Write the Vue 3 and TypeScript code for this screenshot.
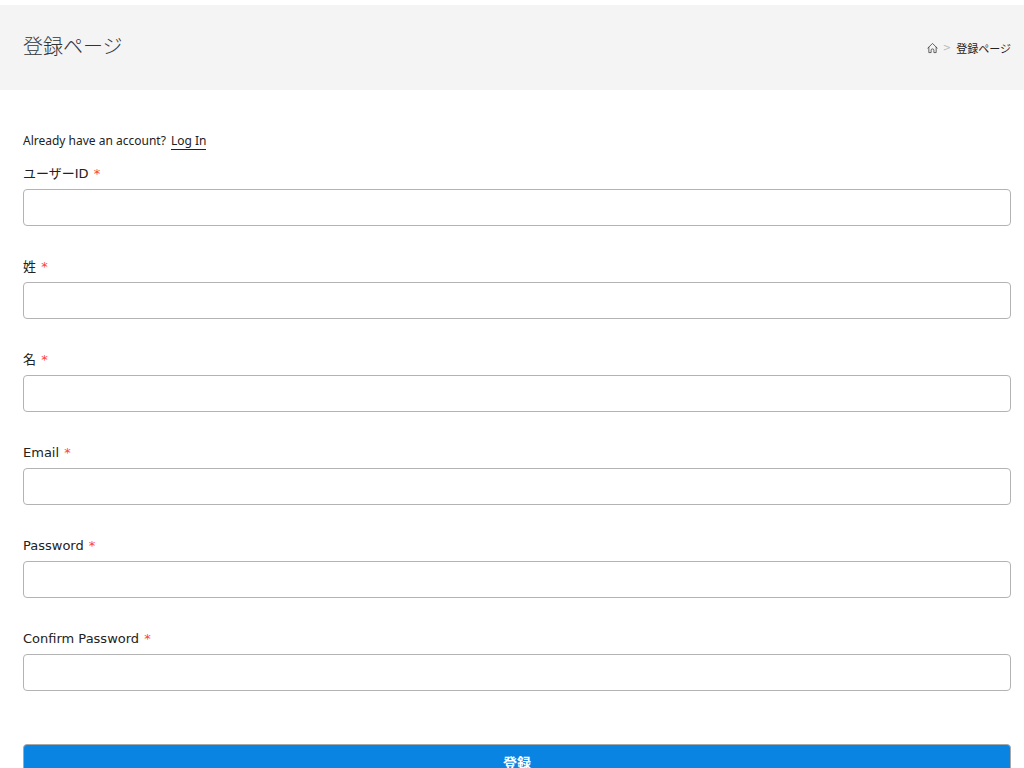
<script setup lang="ts">
import { reactive } from 'vue'

interface Field {
  id: string
  label: string
  type: string
}

const fields: Field[] = [
  { id: 'username', label: 'ユーザーID', type: 'text' },
  { id: 'last-name', label: '姓', type: 'text' },
  { id: 'first-name', label: '名', type: 'text' },
  { id: 'email', label: 'Email', type: 'email' },
  { id: 'password', label: 'Password', type: 'password' },
  { id: 'confirm-password', label: 'Confirm Password', type: 'password' },
]

const values = reactive<Record<string, string>>({})
</script>

<template>
  <div class="page">
    <header class="page-header">
      <h1 class="title">登録ページ</h1>
      <nav class="breadcrumb" aria-label="breadcrumb">
        <a href="#" class="home" aria-label="Home">
          <svg viewBox="0 0 12 12" width="11" height="12" fill="none" stroke="currentColor" stroke-width="0.9" stroke-linejoin="round" stroke-linecap="round">
            <path d="M0.8 6.2 L6 1 L11.2 6.2 M2 5.2 V11 H4.5 V8.4 Q4.5 7 6 7 Q7.5 7 7.5 8.4 V11 H10 V5.2" />
          </svg>
        </a>
        <span class="separator">&gt;</span>
        <a href="#" class="current">登録ページ</a>
      </nav>
    </header>

    <main class="content">
      <p class="account"><span>Already have an account?</span><a href="#" class="login">Log In</a></p>
      <form class="form" @submit.prevent>
        <div v-for="field in fields" :key="field.id" class="field">
          <label :for="field.id" class="label">{{ field.label }} <span class="required">*</span></label>
          <input :id="field.id" v-model="values[field.id]" :type="field.type" class="input" required />
        </div>
        <button type="submit" class="submit">登録</button>
      </form>
    </main>
  </div>
</template>

<style>
body {
  margin: 0;
  background: #fff;
  overflow: hidden;
}
</style>

<style scoped>
.page {
  padding-top: 5px;
  color: #222;
  font-family: "DejaVu Sans", "Noto Sans CJK JP", sans-serif;
}

.page-header {
  display: flex;
  align-items: center;
  justify-content: space-between;
  padding: 25px 13px 28px 23px;
  background: #f4f4f4;
}

.title {
  margin: 0;
  color: #333;
  font-family: "Noto Sans CJK JP", sans-serif;
  font-size: 20px;
  font-weight: 300;
  line-height: 32px;
}

.breadcrumb {
  display: flex;
  align-items: center;
  gap: 5px;
  padding-top: 4px;
  font-family: "Noto Sans CJK JP", sans-serif;
  font-size: 11px;
  line-height: 20px;
}

.home {
  display: flex;
  color: #444;
}

.separator {
  color: #bbb;
  font-family: "DejaVu Sans", sans-serif;
  font-size: 10px;
}

.current {
  color: #222;
  text-decoration: none;
}

.content {
  padding: 40px 13px 0 23px;
}

.account {
  display: flex;
  align-items: baseline;
  gap: 5px;
  margin: 0;
  font-family: "Noto Sans", sans-serif;
  font-size: 12px;
  line-height: 22px;
}

.login {
  border-bottom: 1px solid #222;
  color: inherit;
  line-height: 16px;
  text-decoration: none;
}

.form {
  padding-top: 11px;
}

.field {
  display: flex;
  flex-direction: column;
  gap: 4px;
  margin-bottom: 30px;
}

.label {
  font-size: 13px;
  line-height: 22px;
}

.required {
  margin-left: 1px;
  color: #ff4136;
}

.input {
  box-sizing: border-box;
  width: 100%;
  height: 37px;
  padding: 6px 12px;
  border: 1px solid #b3b3b3;
  border-radius: 4px;
  background: #fff;
  font: inherit;
  font-size: 13px;
}

.submit {
  display: block;
  width: 100%;
  margin-top: 53px;
  padding: 7px 12px;
  border: 1px solid #a8a8a8;
  border-radius: 4px;
  background: #0a84e3;
  color: #fff;
  font: inherit;
  font-size: 14px;
  font-weight: 700;
  line-height: 22px;
}
</style>
